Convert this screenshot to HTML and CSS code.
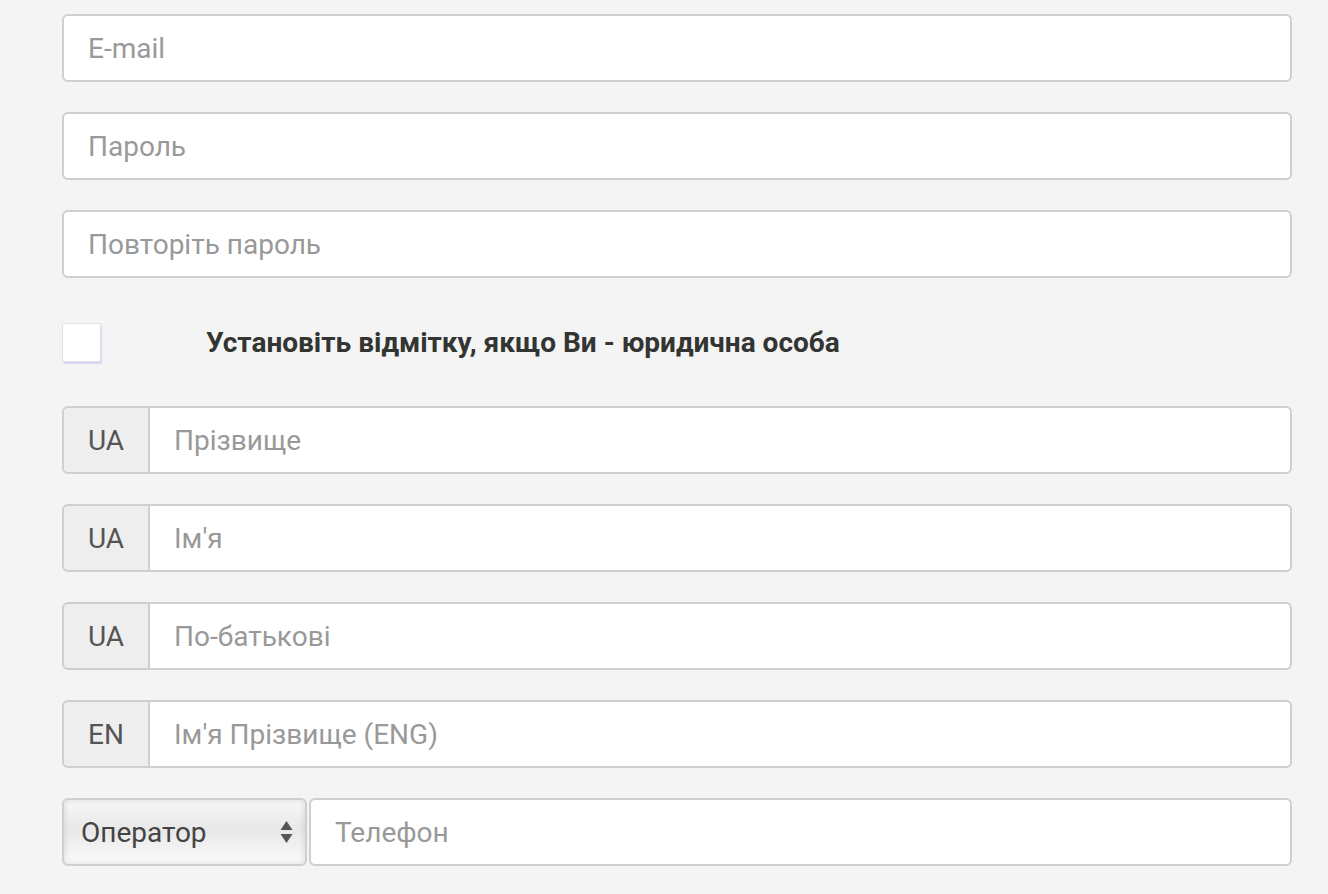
FILE: index.html
```html
<!DOCTYPE html>
<html lang="uk">
<head>
<meta charset="utf-8">
<link rel="stylesheet" href="styles.css">
</head>
<body>
<form class="form">
  <div class="field"><input class="input" type="text" placeholder="E-mail"></div>
  <div class="field"><input class="input" type="password" placeholder="Пароль"></div>
  <div class="field"><input class="input" type="password" placeholder="Повторіть пароль"></div>
  <label class="check-row">
    <span class="checkbox"></span>
    <span class="check-label">Установіть відмітку, якщо Ви - юридична особа</span>
  </label>
  <div class="field group">
    <span class="addon">UA</span><input class="input grouped" type="text" placeholder="Прізвище">
  </div>
  <div class="field group">
    <span class="addon">UA</span><input class="input grouped" type="text" placeholder="Ім'я">
  </div>
  <div class="field group">
    <span class="addon">UA</span><input class="input grouped" type="text" placeholder="По-батькові">
  </div>
  <div class="field group">
    <span class="addon">EN</span><input class="input grouped" type="text" placeholder="Ім'я Прізвище (ENG)">
  </div>
  <div class="field phone">
    <div class="select">
      <span>Оператор</span>
      <svg class="arrows" width="13" height="24" viewBox="0 0 13 24"><path d="M6.5 1 L12.5 10 L0.5 10 Z" fill="#555"/><path d="M6.5 23 L12.5 14 L0.5 14 Z" fill="#555"/></svg>
    </div>
    <input class="input phone-input" type="tel" placeholder="Телефон">
  </div>
</form>
</body>
</html>
```
FILE: styles.css
```css
html, body {
  margin: 0;
  padding: 0;
  background: #f4f4f4;
  font-family: Roboto, "Liberation Sans", sans-serif;
}
.form {
  width: 1230px;
  margin-left: 62px;
  padding-top: 14px;
  display: flex;
  flex-direction: column;
  gap: 30px;
}
.field {
  height: 68px;
  display: flex;
}
.input {
  box-sizing: border-box;
  width: 100%;
  height: 68px;
  border: 2px solid #cfcfcf;
  border-radius: 6px;
  background: #fff;
  padding: 0 0 0 24px;
  font-family: Roboto, "Liberation Sans", sans-serif;
  font-size: 28px;
  color: #555;
  outline: none;
}
.input::placeholder {
  color: #999;
}
.check-row {
  display: flex;
  align-items: center;
  height: 39px;
  margin: 15px 0 14px;
}
.checkbox {
  box-sizing: border-box;
  width: 39px;
  height: 39px;
  background: #fff;
  border: 1px solid #e2e2e2;
  box-shadow: 1px 2px 1px #d4d4f6;
  border-radius: 2px;
  flex: none;
}
.check-label {
  margin-left: 105px;
  font-size: 28px;
  font-weight: bold;
  color: #323532;
}
.group .addon {
  box-sizing: border-box;
  width: 88px;
  height: 68px;
  flex: none;
  display: flex;
  align-items: center;
  justify-content: center;
  background: #eeeeee;
  border: 2px solid #cfcfcf;
  border-radius: 6px 0 0 6px;
  font-size: 28px;
  color: #555;
}
.group .grouped {
  border-left: none;
  border-radius: 0 6px 6px 0;
}
.phone {
  gap: 2px;
}
.select {
  box-sizing: border-box;
  width: 245px;
  height: 68px;
  flex: none;
  display: flex;
  align-items: center;
  justify-content: space-between;
  padding: 0 12px 0 17px;
  border: 2px solid #cfcfcf;
  border-radius: 6px;
  background: linear-gradient(#f8f8f8, #e8e8e8 45%, #fafafa);
  box-shadow: inset 0 0 6px rgba(0,0,0,0.12);
  font-size: 28px;
  color: #444;
}
.arrows {
  display: block;
}
.phone-input {
  flex: 1;
}
```
